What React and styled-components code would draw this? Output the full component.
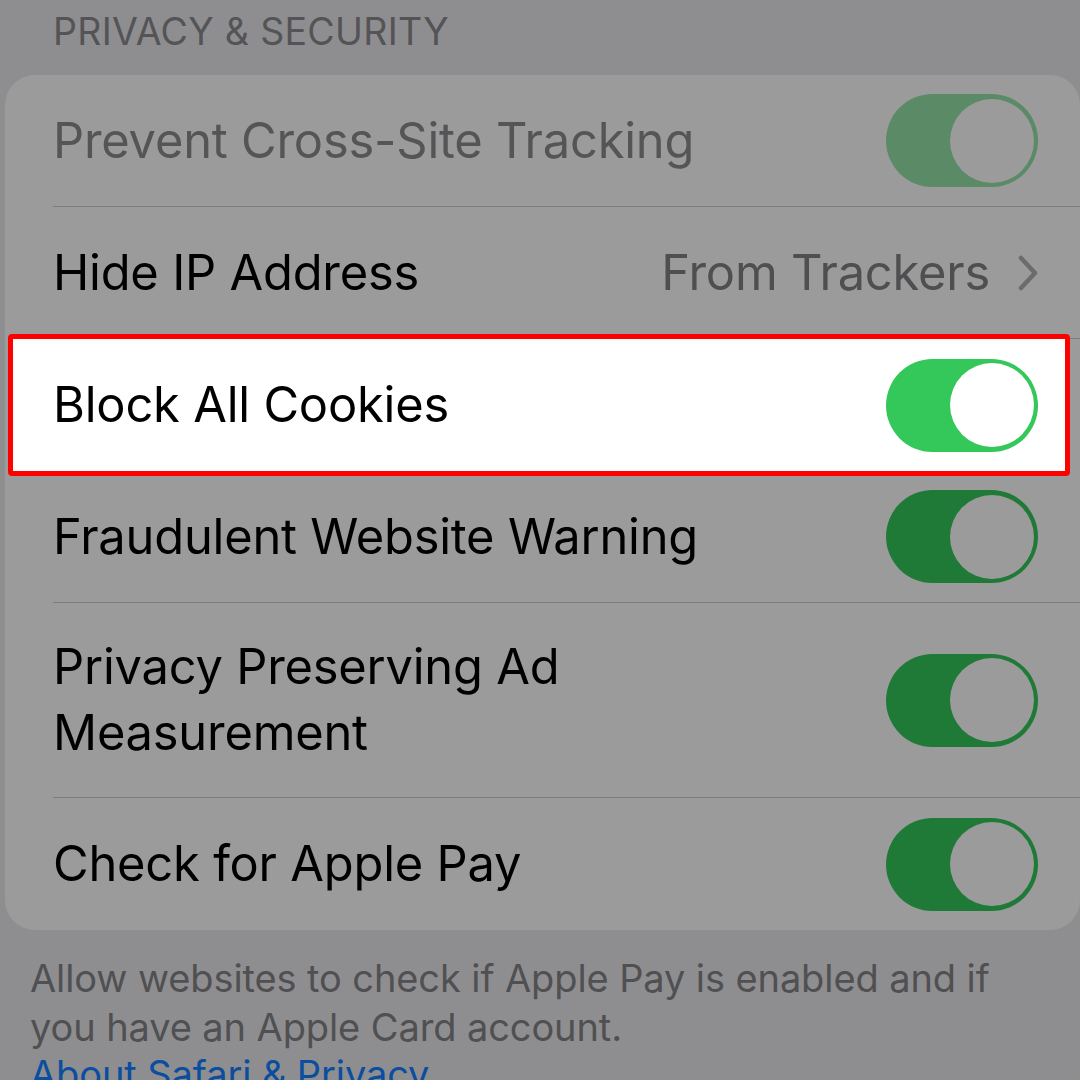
import React from 'react';
import styled, { createGlobalStyle } from 'styled-components';

const Global = createGlobalStyle`
  html, body {
    margin: 0;
    padding: 0;
    background: #8e8e90;
  }
  body {
    font-family: Inter, "Noto Sans", "Liberation Sans", sans-serif;
    overflow: hidden;
  }
`;

const Page = styled.div`
  width: 1080px;
  height: 1080px;
  overflow: hidden;
  background: #8e8e90;
`;

const SectionTitle = styled.div`
  padding: 9px 0 0 53px;
  height: 75px;
  box-sizing: border-box;
  font-size: 37.5px;
  letter-spacing: 0.3px;
  color: #545456;
  line-height: 46px;
`;

const Card = styled.div`
  margin-left: 5px;
  width: 1075px;
  background: #9b9b9b;
  border-radius: 30px;
  display: flex;
  flex-direction: column;
`;

const Row = styled.div`
  display: flex;
  padding-left: 48px;
`;

const RowBody = styled.div`
  flex: 1;
  display: flex;
  align-items: center;
  justify-content: space-between;
  min-height: ${(p) => p.$h || 132}px;
  box-sizing: border-box;
  padding-right: 42px;
  border-bottom: ${(p) => (p.$last ? 'none' : '1px solid #7d7d7d')};
`;

const Highlight = styled.div`
  position: relative;
  z-index: 1;
  display: flex;
  align-items: center;
  justify-content: space-between;
  margin: -5px 10px -5px 3px;
  height: 142px;
  box-sizing: border-box;
  border: 5px solid #ff0000;
  border-radius: 4px;
  background: #ffffff;
  padding: 0 27px 0 40px;
`;

const Label = styled.span`
  font-size: 48.8px;
  line-height: 66px;
  color: ${(p) => p.$color || '#000'};
  letter-spacing: -0.2px;
`;

const Value = styled.span`
  display: flex;
  align-items: center;
  gap: 28px;
  font-size: 48.8px;
  color: #4f4f51;
  letter-spacing: -0.2px;
`;

const Toggle = styled.div`
  width: 152px;
  height: 93px;
  border-radius: 47px;
  background: ${(p) => p.$track};
  display: flex;
  align-items: center;
  justify-content: flex-end;
  padding-right: 4px;
  box-sizing: border-box;
  flex-shrink: 0;
`;

const Knob = styled.div`
  width: 84px;
  height: 84px;
  border-radius: 50%;
  background: ${(p) => p.$knob};
`;

const Footer = styled.div`
  padding: 24px 0 0 30px;
  font-size: 38px;
  line-height: 49px;
  color: #505052;
  letter-spacing: -0.1px;
`;

const LinkText = styled.div`
  color: #0b4d9e;
  line-height: 44px;
`;

const Chevron = () => (
  <svg width="20" height="36" viewBox="0 0 20 36">
    <path d="M3 3 L17 18 L3 33" fill="none" stroke="#6c6c6e" strokeWidth="4.5" strokeLinecap="round" strokeLinejoin="round" />
  </svg>
);

const Switch = ({ track = '#207a37', knob = '#9b9b9b' }) => (
  <Toggle $track={track}>
    <Knob $knob={knob} />
  </Toggle>
);

export default function App() {
  return (
    <Page>
      <Global />
      <SectionTitle>PRIVACY &amp; SECURITY</SectionTitle>
      <Card>
        <Row>
          <RowBody>
            <Label $color="#555557">Prevent Cross-Site Tracking</Label>
            <Switch track="#5b8a67" />
          </RowBody>
        </Row>
        <Row>
          <RowBody>
            <Label>Hide IP Address</Label>
            <Value>
              From Trackers
              <Chevron />
            </Value>
          </RowBody>
        </Row>
        <Highlight>
          <Label>Block All Cookies</Label>
          <Switch track="#34c759" knob="#ffffff" />
        </Highlight>
        <Row>
          <RowBody>
            <Label>Fraudulent Website Warning</Label>
            <Switch />
          </RowBody>
        </Row>
        <Row>
          <RowBody $h={195}>
            <Label>
              Privacy Preserving Ad
              <br />
              Measurement
            </Label>
            <Switch />
          </RowBody>
        </Row>
        <Row>
          <RowBody $last>
            <Label>Check for Apple Pay</Label>
            <Switch />
          </RowBody>
        </Row>
      </Card>
      <Footer>
        Allow websites to check if Apple Pay is enabled and if
        <br />
        you have an Apple Card account.
        <LinkText>About Safari &amp; Privacy</LinkText>
      </Footer>
    </Page>
  );
}
